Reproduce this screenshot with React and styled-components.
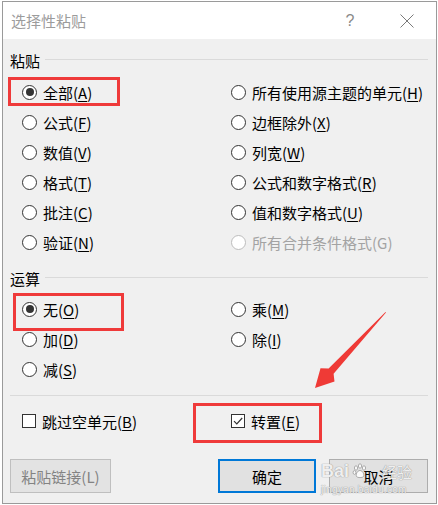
import React from "react";
import styled, { createGlobalStyle } from "styled-components";

const GlobalStyle = createGlobalStyle`
  html, body {
    margin: 0;
    padding: 0;
    background: #fff;
  }
  body {
    font-family: "Noto Sans CJK SC", "Microsoft YaHei", sans-serif;
  }
`;

const Page = styled.div`
  position: relative;
  width: 438px;
  height: 505px;
  padding: 1px 1px 1px 2px;
  box-sizing: border-box;
  overflow: hidden;
`;

const Dialog = styled.div`
  width: 435px;
  height: 503px;
  box-sizing: border-box;
  border: 1px solid #9a9a9a;
  background: #f0f0f0;
  display: flex;
  flex-direction: column;
`;

const TitleBar = styled.div`
  height: 37px;
  flex: none;
  background: #fff;
  display: flex;
  align-items: center;
  padding: 0 6px 0 8px;
`;

const Title = styled.div`
  flex: 1;
  font-size: 15px;
  color: #9c9c9c;
`;

const TitleButton = styled.div`
  width: 46px;
  height: 37px;
  display: flex;
  align-items: center;
  justify-content: center;
  color: #8a8a8a;
  font-size: 16px;
  font-family: "Liberation Sans", sans-serif;
  margin-right: ${(p) => p.$gap || 0}px;
`;

const Body = styled.div`
  flex: 1;
  display: flex;
  flex-direction: column;
  padding: 11px 8px 9px 7px;
`;

const GroupHeader = styled.div`
  height: 20px;
  display: flex;
  align-items: center;
  gap: 5px;
  font-size: 15px;
  color: #000;
  margin-top: ${(p) => p.$top || 0}px;
  &::after {
    content: "";
    flex: 1;
    height: 1px;
    background: #dadada;
    margin-top: -1px;
  }
`;

const OptionGrid = styled.div`
  display: grid;
  grid-auto-flow: column;
  grid-template-columns: 209px 1fr;
  grid-template-rows: repeat(${(p) => p.$rows}, 30px);
  padding-left: 12px;
  margin-top: ${(p) => p.$top}px;
`;

const Option = styled.label`
  display: flex;
  align-items: center;
  gap: 6px;
  font-size: 15px;
  white-space: nowrap;
  color: ${(p) => (p.$disabled ? "#a3a3a3" : "#000")};
  u {
    text-underline-offset: 2px;
  }
`;

const Radio = styled.span`
  width: 15px;
  height: 15px;
  flex: none;
  box-sizing: border-box;
  border-radius: 50%;
  border: 1px solid ${(p) => (p.$disabled ? "#bcbcbc" : "#333")};
  background: #fff;
  display: flex;
  align-items: center;
  justify-content: center;
  &::after {
    content: "";
    width: 8px;
    height: 8px;
    border-radius: 50%;
    background: ${(p) => (p.$checked ? "#333" : "transparent")};
  }
`;

const Box = styled.span`
  width: 14px;
  height: 14px;
  flex: none;
  box-sizing: border-box;
  border: 1px solid #333;
  background: #fff;
  display: flex;
  align-items: center;
  justify-content: center;
`;

const Separator = styled.div`
  height: 1px;
  background: #dadada;
  margin-top: 11px;
`;

const ButtonRow = styled.div`
  display: flex;
  gap: 13px;
  margin-top: 23px;
`;

const Button = styled.div`
  width: ${(p) => p.$w}px;
  height: 34px;
  box-sizing: border-box;
  display: flex;
  align-items: center;
  justify-content: center;
  font-size: 15px;
  background: ${(p) => (p.$disabled ? "#e3e3e3" : "#e1e1e1")};
  color: ${(p) => (p.$disabled ? "#838383" : "#000")};
  border: ${(p) => (p.$primary ? "2px solid #0078d7" : "1px solid " + (p.$disabled ? "#bfbfbf" : "#adadad"))};
  margin-left: ${(p) => (p.$push ? "auto" : "0")};
`;

const Mark = styled.div`
  position: absolute;
  left: ${(p) => p.$x}px;
  top: ${(p) => p.$y}px;
  width: ${(p) => p.$w}px;
  height: ${(p) => p.$h}px;
  box-sizing: border-box;
  border: 3px solid #ef3a3a;
  pointer-events: none;
`;

const ArrowSvg = styled.svg`
  position: absolute;
  left: 0;
  top: 0;
  pointer-events: none;
`;

const Watermark = styled.div`
  position: absolute;
  left: 321px;
  top: 462px;
  width: 92px;
  display: flex;
  flex-direction: column;
  align-items: flex-start;
  color: rgba(255, 255, 255, 0.85);
  text-shadow: 0 0 1px #9a9a9a, 0 0 1px #9a9a9a;
  pointer-events: none;
`;

const WmTop = styled.div`
  display: flex;
  align-items: center;
  height: 18px;
  font-family: "Liberation Sans", sans-serif;
  font-weight: bold;
  font-size: 18px;
  span:last-child {
    font-family: "Noto Sans CJK SC", sans-serif;
    font-weight: normal;
    font-size: 15px;
    margin-left: 14px;
  }
`;

const WmUrl = styled.div`
  font-family: "Liberation Sans", sans-serif;
  font-size: 10px;
  line-height: 12px;
  margin-top: 4px;
  letter-spacing: 0.3px;
`;

const pasteOptions = [
  { text: "全部", key: "A", checked: true },
  { text: "公式", key: "F" },
  { text: "数值", key: "V" },
  { text: "格式", key: "T" },
  { text: "批注", key: "C" },
  { text: "验证", key: "N" },
  { text: "所有使用源主题的单元", key: "H" },
  { text: "边框除外", key: "X" },
  { text: "列宽", key: "W" },
  { text: "公式和数字格式", key: "R" },
  { text: "值和数字格式", key: "U" },
  { text: "所有合并条件格式", key: "G", disabled: true },
];

const opOptions = [
  { text: "无", key: "O", checked: true },
  { text: "加", key: "D" },
  { text: "减", key: "S" },
  { text: "乘", key: "M" },
  { text: "除", key: "I" },
];

function RadioOption({ text, k, checked, disabled }) {
  return (
    <Option $disabled={disabled}>
      <Radio $checked={checked} $disabled={disabled} />
      <span>
        {text}({disabled ? k : <u>{k}</u>})
      </span>
    </Option>
  );
}

function CheckOption({ text, k, checked }) {
  return (
    <Option>
      <Box>
        {checked && (
          <svg width="12" height="12" viewBox="0 0 12 12">
            <path d="M2 6.2 L4.8 9 L10.2 3" fill="none" stroke="#333" strokeWidth="1.2" />
          </svg>
        )}
      </Box>
      <span>
        {text}(<u>{k}</u>)
      </span>
    </Option>
  );
}

function Paw() {
  return (
    <svg width="16" height="16" viewBox="0 0 16 16" style={{ margin: "0 0 0 3px" }}>
      <g fill="rgba(255,255,255,0.85)" stroke="#9a9a9a" strokeWidth="0.8">
        <ellipse cx="4" cy="5" rx="1.6" ry="2.2" />
        <ellipse cx="8" cy="3" rx="1.6" ry="2.2" />
        <ellipse cx="12" cy="5" rx="1.6" ry="2.2" />
        <ellipse cx="2.5" cy="9.5" rx="1.4" ry="1.9" />
        <path d="M8 7.5 C5 7.5 3.5 12 4.5 13.5 C5.5 15 10.5 15 11.5 13.5 C12.5 12 11 7.5 8 7.5 Z" />
      </g>
    </svg>
  );
}

export default function App() {
  return (
    <>
      <GlobalStyle />
      <Page>
        <Dialog>
          <TitleBar>
            <Title>选择性粘贴</Title>
            <TitleButton $gap={11}>?</TitleButton>
            <TitleButton>
              <svg width="14" height="14" viewBox="0 0 14 14">
                <path d="M0.5 0.5 L13.5 13.5 M13.5 0.5 L0.5 13.5" stroke="#7a7a7a" strokeWidth="1" />
              </svg>
            </TitleButton>
          </TitleBar>
          <Body>
            <GroupHeader>粘贴</GroupHeader>
            <OptionGrid $rows={6} $top={7}>
              {pasteOptions.map((o) => (
                <RadioOption key={o.key} text={o.text} k={o.key} checked={o.checked} disabled={o.disabled} />
              ))}
            </OptionGrid>
            <GroupHeader $top={11}>运算</GroupHeader>
            <OptionGrid $rows={3} $top={6}>
              {opOptions.map((o) => (
                <RadioOption key={o.key} text={o.text} k={o.key} checked={o.checked} />
              ))}
            </OptionGrid>
            <Separator />
            <OptionGrid $rows={1} $top={10}>
              <CheckOption text="跳过空单元" k="B" />
              <CheckOption text="转置" k="E" checked />
            </OptionGrid>
            <ButtonRow>
              <Button $w={101} $disabled>
                粘贴链接(L)
              </Button>
              <Button $w={98} $primary $push>
                确定
              </Button>
              <Button $w={99}>取消</Button>
            </ButtonRow>
          </Body>
        </Dialog>

        <Mark $x={8} $y={77} $w={112} $h={29} />
        <Mark $x={13} $y={293} $w={111} $h={38} />
        <Mark $x={193} $y={403} $w={129} $h={40} />

        <ArrowSvg width="438" height="505" viewBox="0 0 438 505">
          <polygon
            points="386,312.5 333.6,373.8 334.5,381.5 315,388 320.5,368.3 328.6,368.6 385.5,312"
            fill="#ef3a36"
          />
        </ArrowSvg>

        <Watermark>
          <WmTop>
            <span>Bai</span>
            <Paw />
            <span>经验</span>
          </WmTop>
          <WmUrl>jingyan.baidu.com</WmUrl>
        </Watermark>
      </Page>
    </>
  );
}
